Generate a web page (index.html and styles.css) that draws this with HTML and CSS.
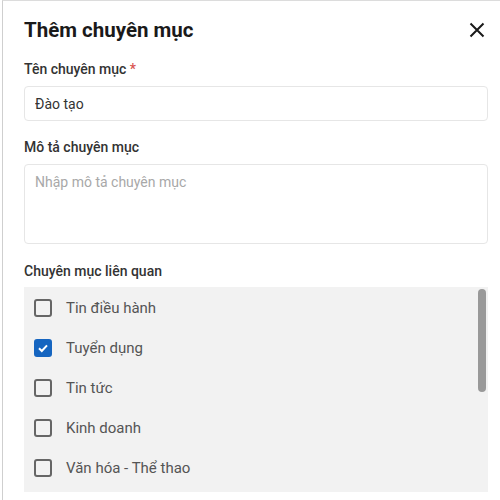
FILE: index.html
```html
<!DOCTYPE html>
<html lang="vi">
<head>
    <meta charset="UTF-8">
    <meta name="viewport" content="width=device-width, initial-scale=1.0">
    <title>Thêm chuyên mục</title>
    <link rel="stylesheet" href="styles.css">
</head>
<body>
    <div class="dialog">
        <div class="dialog-header">
            <h1>Thêm chuyên mục</h1>
            <button class="close-btn" aria-label="Đóng">
                <svg width="16" height="16" viewBox="0 0 16 16">
                    <path d="M1.5 1.5 L14.5 14.5 M14.5 1.5 L1.5 14.5" stroke="#1a1a1a" stroke-width="2" fill="none"/>
                </svg>
            </button>
        </div>

        <label class="field-label">Tên chuyên mục <span class="required">*</span></label>
        <input class="text-input" type="text" value="Đào tạo">

        <label class="field-label">Mô tả chuyên mục</label>
        <textarea class="text-area" placeholder="Nhập mô tả chuyên mục"></textarea>

        <label class="field-label">Chuyên mục liên quan</label>
        <div class="check-list">
            <div class="check-row"><span class="box"></span>Tin điều hành</div>
            <div class="check-row"><span class="box checked">
                <svg width="12" height="12" viewBox="0 0 12 12"><path d="M2 6.2 L4.8 9 L10 3.4" stroke="#fff" stroke-width="2" fill="none"/></svg>
            </span>Tuyển dụng</div>
            <div class="check-row"><span class="box"></span>Tin tức</div>
            <div class="check-row"><span class="box"></span>Kinh doanh</div>
            <div class="check-row"><span class="box"></span>Văn hóa - Thể thao</div>
            <div class="scroll-thumb"></div>
        </div>
    </div>
</body>
</html>
```

FILE: styles.css
```css
body {
    margin: 0;
    background-color: #fff;
    font-family: Roboto, "Liberation Sans", sans-serif;
    color: #222;
}

.dialog {
    margin-left: 2px;
    height: 500px;
    box-sizing: border-box;
    border-left: 1px solid #cfcfcf;
    border-top: 1px solid #dcdcdc;
    padding: 15px 12px 0 21px;
    display: flex;
    flex-direction: column;
}

.dialog-header {
    display: flex;
    justify-content: space-between;
    align-items: center;
    height: 28px;
}

.dialog-header h1 {
    margin: 0;
    font-size: 20.5px;
    font-weight: 700;
    color: #1a1a1a;
}

.close-btn {
    border: none;
    background: none;
    padding: 0;
    margin-right: 3px;
    width: 16px;
    height: 16px;
    cursor: pointer;
}

.field-label {
    font-size: 14px;
    font-weight: 500;
    line-height: 20px;
    color: #333;
    margin-top: 15px;
    margin-bottom: 7px;
}

.required {
    color: #d9534f;
}

.text-input,
.text-area {
    box-sizing: border-box;
    width: 100%;
    border: 1px solid #e6e6e6;
    border-radius: 4px;
    font-family: inherit;
    font-size: 14px;
    color: #333;
    padding: 0 10px;
    background: #fff;
}

.text-input {
    height: 35px;
}

.text-area {
    height: 80px;
    padding-top: 9px;
    resize: none;
    margin-bottom: 2px;
}

.text-area::placeholder {
    color: #a8a8a8;
}

.text-input + .field-label {
    margin-top: 16px;
}

.check-list {
    position: relative;
    flex: 1;
    background-color: #f2f2f2;
    margin-bottom: 8px;
    margin-top: -1px;
    padding-top: 1px;
}

.check-row {
    display: flex;
    align-items: center;
    height: 40px;
    padding-left: 10px;
    font-size: 15px;
    color: #555;
}

.box {
    box-sizing: border-box;
    width: 18px;
    height: 18px;
    border: 2px solid #666;
    border-radius: 3px;
    margin-right: 14px;
    display: flex;
    align-items: center;
    justify-content: center;
}

.box.checked {
    background-color: #1565c0;
    border-color: #1565c0;
}

.scroll-thumb {
    position: absolute;
    top: 2px;
    right: 2px;
    width: 8px;
    height: 103px;
    border-radius: 4px;
    background-color: #999;
}
```
